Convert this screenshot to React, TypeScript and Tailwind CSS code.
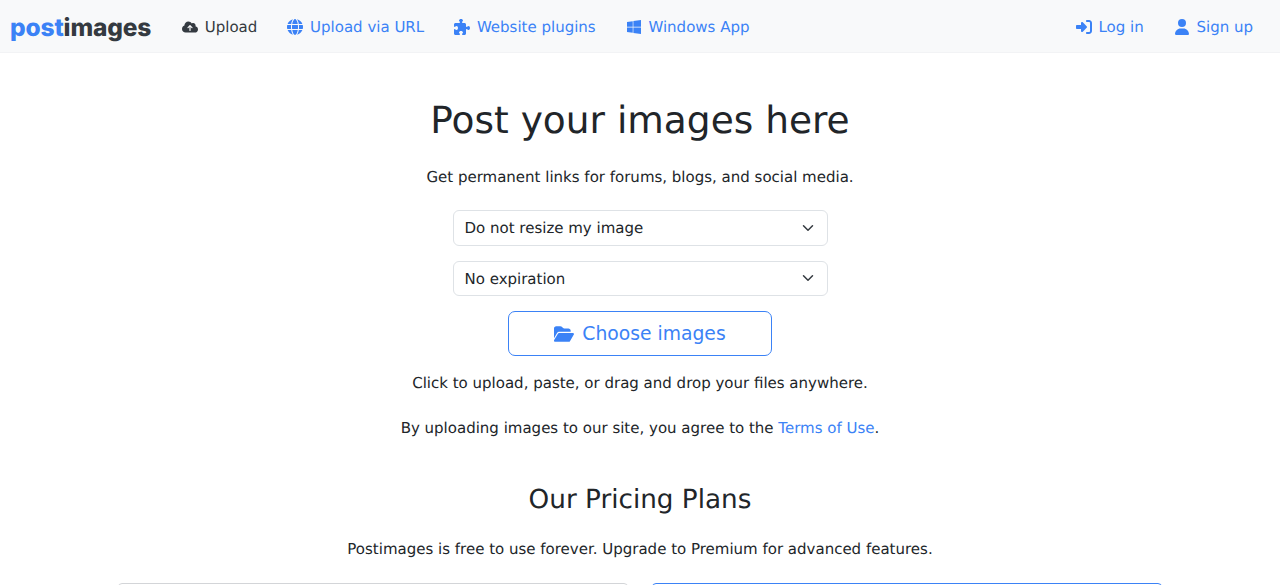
import { FaCloudArrowUp, FaGlobe, FaPuzzlePiece, FaWindows, FaRightToBracket, FaUser, FaFolderOpen } from "react-icons/fa6";
import type { ReactNode } from "react";

function NavLink({ icon, label, dark }: { icon: ReactNode; label: string; dark?: boolean }) {
  return (
    <a href="#" className={`flex items-center gap-[6.75px] px-2 ${dark ? "text-[#343a40]" : "text-[#3b82f6]"}`}>
      <span className="text-[16px]">{icon}</span>
      {label}
    </a>
  );
}

function SelectBox({ label }: { label: string }) {
  return (
    <div className="flex h-[35.5px] w-[375px] items-center justify-between rounded-md border border-[#dee2e6] bg-white pl-[11px] pr-[12.5px] text-[#212529]">
      <span className="pt-[1px]">{label}</span>
      <svg width="12" height="12" viewBox="0 0 16 16" fill="none">
        <path d="M2 5l6 6 6-6" stroke="#343a40" strokeWidth="2" strokeLinecap="round" strokeLinejoin="round" />
      </svg>
    </div>
  );
}

export default function App() {
  return (
    <div className="h-[585px] overflow-hidden bg-white text-[15px] leading-[22.5px] text-[#212529] [text-rendering:geometricPrecision]" style={{ fontFamily: '"DejaVu Sans", sans-serif' }}>
      <nav className="flex h-[53px] items-center justify-between border-b border-[#f2f3f5] bg-[#f8f9fa] pl-[10px] pr-[19px] pt-[2px]">
        <div className="flex items-center">
          <a href="#" className="mr-[14px] w-[150px] text-[24.5px] font-extrabold leading-none tracking-[-0.15px] text-[#343a40]" style={{ fontFamily: "Inter, sans-serif" }}>
            <span className="text-[#3b82f6]">post</span>images
          </a>
          <div className="flex gap-[14px]">
            <NavLink dark icon={<FaCloudArrowUp />} label="Upload" />
            <NavLink icon={<FaGlobe />} label="Upload via URL" />
            <NavLink icon={<FaPuzzlePiece />} label="Website plugins" />
            <NavLink icon={<FaWindows />} label="Windows App" />
          </div>
        </div>
        <div className="flex gap-[14px]">
          <NavLink icon={<FaRightToBracket />} label="Log in" />
          <NavLink icon={<FaUser />} label="Sign up" />
        </div>
      </nav>

      <main className="flex flex-col items-center">
        <h1 className="mt-[45px] text-[37.5px] leading-[45px]">Post your images here</h1>
        <p className="mt-[23px]">Get permanent links for forums, blogs, and social media.</p>
        <div className="mt-[21.5px] flex flex-col gap-[15px]">
          <SelectBox label="Do not resize my image" />
          <SelectBox label="No expiration" />
        </div>
        <button className="mt-[15px] flex h-[45px] w-[264px] items-center justify-center gap-2 rounded-[7px] border border-[#3b82f6] text-[18.75px] text-[#3b82f6]">
          <FaFolderOpen className="text-[20px]" />
          <span className="pt-[2px]">Choose images</span>
        </button>
        <p className="mt-[16px]">Click to upload, paste, or drag and drop your files anywhere.</p>
        <p className="mt-[22px]">
          By uploading images to our site, you agree to the <a href="#" className="text-[#3b82f6]">Terms of Use</a>.
        </p>
        <h2 className="mt-[45px] text-[26.25px] leading-[32px]">Our Pricing Plans</h2>
        <p className="mt-[22px]">Postimages is free to use forever. Upgrade to Premium for advanced features.</p>
        <div className="mt-[22px] flex gap-6">
          <div className="h-[200px] w-[510px] rounded-[4px] border border-[#d3d5d8]" />
          <div className="h-[200px] w-[510px] rounded-[4px] border border-[#3b82f6]" />
        </div>
      </main>
    </div>
  );
}
